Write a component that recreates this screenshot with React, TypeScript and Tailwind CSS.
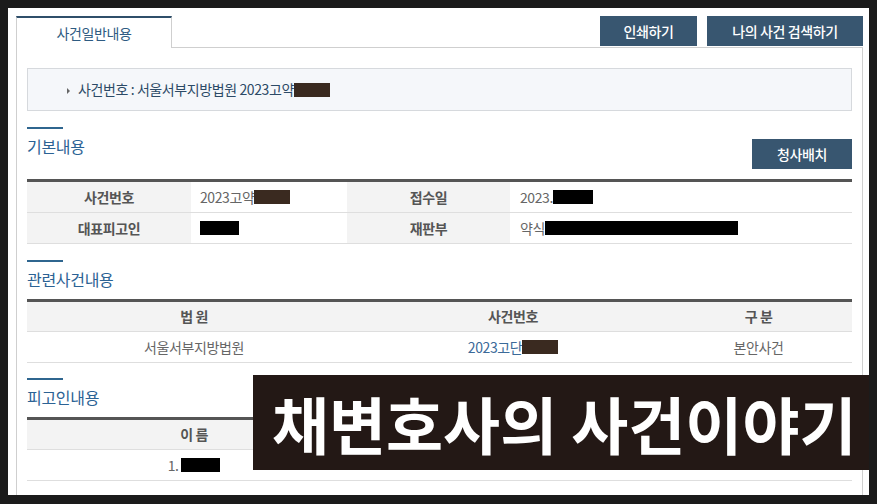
const font = { fontFamily: '"Noto Sans CJK KR", "Noto Sans", sans-serif' };

function Redact({ w, brown }: { w: number; brown?: boolean }) {
  return (
    <span
      className={`inline-block h-[14px] align-[-2px] ${brown ? 'bg-[#3a2a20]' : 'bg-black'}`}
      style={{ width: w }}
    />
  );
}

function SectionTitle({ children }: { children: React.ReactNode }) {
  return (
    <div>
      <div className="w-9 h-[2px] bg-[#2f668f]" />
      <h2 className="mt-[5px] text-[16px] leading-6 tracking-[-0.3px] text-[#2b6294]">{children}</h2>
    </div>
  );
}

export default function App() {
  return (
    <div className="w-[877px] h-[504px] bg-[#1b1b1b] pt-2 pl-2 text-[14px] tracking-[-0.4px]" style={font}>
      <div className="relative w-[861px] h-[487px] bg-white overflow-hidden pl-2 pr-[6px] pt-2">
        {/* Tabs + buttons */}
        <div className="flex h-[32px]">
          <div className="w-[156px] h-[32px] border-t-2 border-x border-t-[#2f4f6a] border-x-[#cfcfcf] bg-white flex items-center justify-center text-[#2e5b82]">
            사건일반내용
          </div>
          <div className="flex-1 flex justify-end items-start gap-[10px] border-b border-[#cfcfcf]">
            <button className="w-[97px] h-[30px] bg-[#385670] text-white font-medium">인쇄하기</button>
            <button className="w-[156px] h-[30px] bg-[#385670] text-white font-medium">나의 사건 검색하기</button>
          </div>
        </div>

        {/* Panel */}
        <div className="h-[460px] border-x border-[#cfcfcf] px-[10px] pt-5">
          <div className="h-[43px] border border-[#d6d9dd] bg-[#f5f7fa] flex items-center pl-[39px] text-[#2c4a66]">
            <span className="w-0 h-0 border-y-[3px] border-y-transparent border-l-[3px] border-l-[#666] mt-[3px]" />
            <span className="ml-2">
              사건번호 : 서울서부지방법원 2023고약<Redact w={36} brown />
            </span>
          </div>

          {/* 기본내용 */}
          <div className="mt-4 flex items-start justify-between">
            <SectionTitle>기본내용</SectionTitle>
            <button className="mt-3 w-[100px] h-[30px] bg-[#385670] text-white font-medium">청사배치</button>
          </div>
          <div className="mt-[10px] border-t-[3px] border-[#555] text-[#666]">
            <div className="flex h-[31px] border-b border-[#dedede]">
              <div className="w-[164px] bg-[#f3f3f3] flex items-center justify-center font-bold text-[#555]">사건번호</div>
              <div className="w-[156px] flex items-center pl-[9px]">
                2023고약<Redact w={36} brown />
              </div>
              <div className="w-[163px] bg-[#f3f3f3] flex items-center justify-center font-bold text-[#555]">접수일</div>
              <div className="flex-1 flex items-center pl-[10px]">
                2023.<Redact w={40} />
              </div>
            </div>
            <div className="flex h-[31px] border-b border-[#dedede]">
              <div className="w-[164px] bg-[#f3f3f3] flex items-center justify-center font-bold text-[#555]">대표피고인</div>
              <div className="w-[156px] flex items-center pl-[9px]">
                <Redact w={39} />
              </div>
              <div className="w-[163px] bg-[#f3f3f3] flex items-center justify-center font-bold text-[#555]">재판부</div>
              <div className="flex-1 flex items-center pl-[10px]">
                약식<Redact w={193} />
              </div>
            </div>
          </div>

          {/* 관련사건내용 */}
          <div className="mt-4">
            <SectionTitle>관련사건내용</SectionTitle>
          </div>
          <div className="mt-2 border-t-[3px] border-[#555] text-[#666]">
            <div className="flex h-[30px] bg-[#f3f3f3] border-b border-[#dedede] font-bold text-[#555]">
              <div className="w-[334px] flex items-center justify-center">법 원</div>
              <div className="w-[304px] flex items-center justify-center">사건번호</div>
              <div className="flex-1 flex items-center justify-center">구 분</div>
            </div>
            <div className="flex h-[31px] border-b border-[#dedede]">
              <div className="w-[334px] flex items-center justify-center">서울서부지방법원</div>
              <div className="w-[304px] flex items-center justify-center text-[#3b6a99]">
                2023고단<Redact w={36} brown />
              </div>
              <div className="flex-1 flex items-center justify-center">본안사건</div>
            </div>
          </div>

          {/* 피고인내용 */}
          <div className="mt-[15px]">
            <SectionTitle>피고인내용</SectionTitle>
          </div>
          <div className="mt-2 border-t-[3px] border-[#555] text-[#666]">
            <div className="flex h-[30px] bg-[#f3f3f3] border-b border-[#dedede] font-bold text-[#555]">
              <div className="w-[334px] flex items-center justify-center">이 름</div>
              <div className="flex-1" />
            </div>
            <div className="flex h-[31px] border-b border-[#dedede]">
              <div className="w-[334px] flex items-center justify-center">
                1.&nbsp;<Redact w={39} />
              </div>
              <div className="flex-1" />
            </div>
          </div>
        </div>

        {/* Overlay caption */}
        <div className="absolute left-[245px] right-0 top-[367px] h-[95px] bg-[#231815] flex items-center pl-[19px]">
          <span className="text-white text-[62px] font-bold leading-none tracking-normal">채변호사의 사건이야기</span>
        </div>
      </div>
    </div>
  );
}
